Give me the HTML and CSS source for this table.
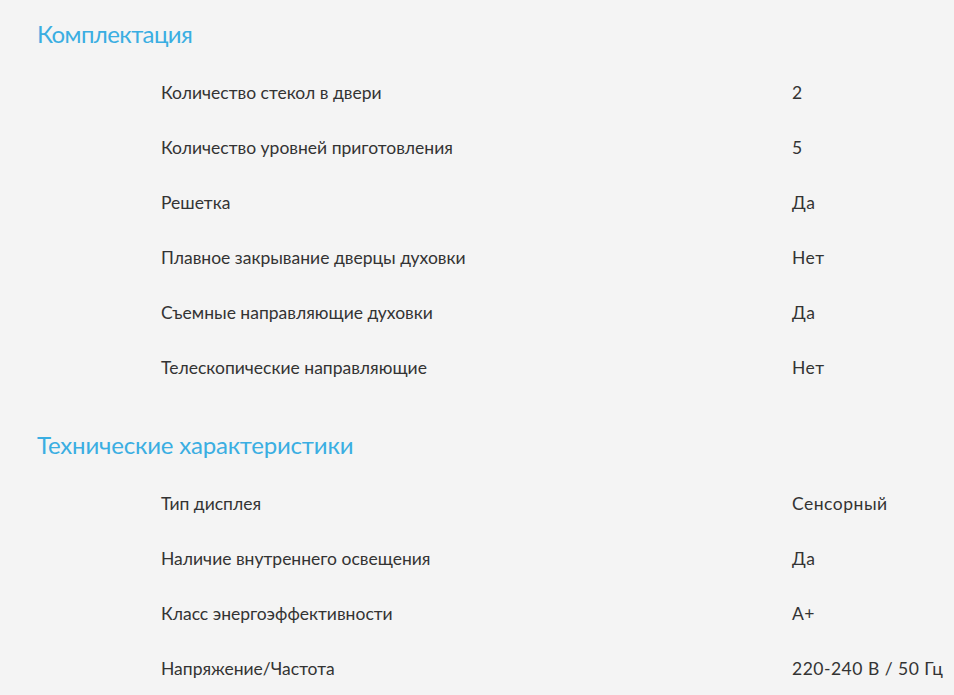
FILE: index.html
```html
<!DOCTYPE html>
<html lang="ru">
<head>
<meta charset="utf-8">
<title>Характеристики</title>
<link rel="stylesheet" href="styles.css">
</head>
<body>
<div class="specs">
  <section class="group">
    <h2 class="group-title">Комплектация</h2>
    <div class="row"><span class="label">Количество стекол в двери</span><span class="value">2</span></div>
    <div class="row"><span class="label">Количество уровней приготовления</span><span class="value">5</span></div>
    <div class="row"><span class="label">Решетка</span><span class="value">Да</span></div>
    <div class="row"><span class="label">Плавное закрывание дверцы духовки</span><span class="value">Нет</span></div>
    <div class="row"><span class="label">Съемные направляющие духовки</span><span class="value">Да</span></div>
    <div class="row"><span class="label">Телескопические направляющие</span><span class="value">Нет</span></div>
  </section>
  <section class="group">
    <h2 class="group-title">Технические характеристики</h2>
    <div class="row"><span class="label">Тип дисплея</span><span class="value">Сенсорный</span></div>
    <div class="row"><span class="label">Наличие внутреннего освещения</span><span class="value">Да</span></div>
    <div class="row"><span class="label">Класс энергоэффективности</span><span class="value">A+</span></div>
    <div class="row"><span class="label">Напряжение/Частота</span><span class="value">220-240 В / 50 Гц</span></div>
  </section>
</div>
</body>
</html>
```
FILE: styles.css
```css
html, body {
  margin: 0;
  padding: 0;
  background: #f4f4f4;
}
body {
  font-family: Lato, "Liberation Sans", sans-serif;
  color: #333333;
  overflow: hidden;
}
.specs {
  padding: 19px 0 0 37px;
}
.group + .group {
  margin-top: 35px;
}
.group-title {
  margin: 0 0 16px 0;
  font-size: 24px;
  line-height: 30px;
  font-weight: 400;
  letter-spacing: -0.2px;
  color: #3aaee2;
}
.group:first-child .group-title {
  letter-spacing: -0.6px;
}
.row {
  display: grid;
  grid-template-columns: 631px 1fr;
  padding-left: 124px;
  height: 55px;
  line-height: 55px;
  font-size: 17.5px;
  white-space: nowrap;
}
.value {
  letter-spacing: 0.5px;
}
```
